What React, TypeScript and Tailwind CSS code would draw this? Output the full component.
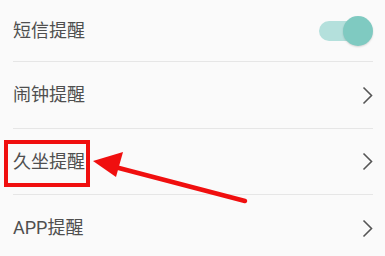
import React from "react";

const Chevron = () => (
  <svg width="11" height="19" viewBox="0 0 11 19" className="shrink-0">
    <path d="M1.5 1.5 L9.5 9.5 L1.5 17.5" fill="none" stroke="#555" strokeWidth="1.6" />
  </svg>
);

export default function App() {
  const font = { fontFamily: 'Roboto, "Noto Sans CJK SC", sans-serif' };
  return (
    <div className="relative w-[385px] h-[256px] bg-[#fafafa] overflow-hidden" style={font}>
      <div className="pl-[13px] pr-[12px]">
        <div className="h-[62px] flex items-center justify-between border-b border-[#e6e6e6]">
          <span className="text-[18px] text-[#4f4f4f] leading-none">短信提醒</span>
          <div className="relative w-[54px] h-[30px]">
            <div className="absolute left-0 top-[5px] w-[46px] h-[20px] rounded-full bg-[#b4e0dc]" />
            <div className="absolute right-0 top-0 w-[30px] h-[30px] rounded-full bg-[#7fcac1] shadow-[0_1px_2px_rgba(0,0,0,0.15)]" />
          </div>
        </div>
        <div className="h-[67px] flex items-center justify-between border-b border-[#e6e6e6]">
          <span className="text-[18px] text-[#4f4f4f] leading-none">闹钟提醒</span>
          <Chevron />
        </div>
        <div className="h-[66px] flex items-center justify-between border-b border-[#e6e6e6]">
          <span className="text-[18px] text-[#4f4f4f] leading-none">久坐提醒</span>
          <Chevron />
        </div>
        <div className="h-[66px] flex items-center justify-between">
          <span className="text-[18px] text-[#4f4f4f] leading-none">APP提醒</span>
          <Chevron />
        </div>
      </div>
      <div className="absolute left-[4px] top-[140px] w-[86px] h-[47px] border-[4px] border-[#f00f0f]" />
      <svg className="absolute left-0 top-0" width="385" height="256" viewBox="0 0 385 256">
        <line x1="245" y1="201" x2="115" y2="167" stroke="#f00f0f" strokeWidth="4.5" strokeLinecap="round" />
        <polygon points="93,161 123,152 116,177" fill="#f00f0f" />
      </svg>
    </div>
  );
}
